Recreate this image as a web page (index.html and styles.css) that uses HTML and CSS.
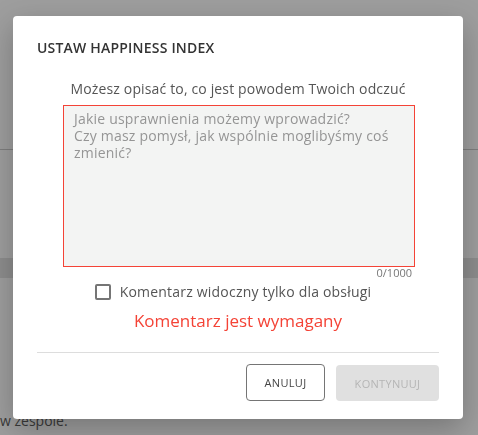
FILE: index.html
```html
<!DOCTYPE html>
<html lang="pl">
<head>
    <meta charset="UTF-8">
    <meta name="viewport" content="width=device-width, initial-scale=1.0">
    <title>Ustaw Happiness Index</title>
    <link rel="stylesheet" href="styles.css">
</head>
<body>
    <div class="page">
        <div class="page-line"></div>
        <div class="page-band"></div>
        <div class="page-text">w zespole.</div>
    </div>

    <div class="overlay">
        <div class="modal">
            <h2 class="modal-title">USTAW HAPPINESS INDEX</h2>
            <p class="modal-hint">Możesz opisać to, co jest powodem Twoich odczuć</p>

            <div class="field">
                <textarea class="comment invalid" placeholder="Jakie usprawnienia możemy wprowadzić?&#10;Czy masz pomysł, jak wspólnie moglibyśmy coś zmienić?"></textarea>
                <div class="counter">0/1000</div>
            </div>

            <label class="check">
                <span class="check-box"></span>
                <span>Komentarz widoczny tylko dla obsługi</span>
            </label>

            <div class="error-msg">Komentarz jest wymagany</div>

            <div class="modal-footer">
                <button class="btn btn-outline">ANULUJ</button>
                <button class="btn btn-disabled" disabled>KONTYNUUJ</button>
            </div>
        </div>
    </div>
</body>
</html>
```

FILE: styles.css
```css
html, body { margin: 0; padding: 0; height: 100%; }
body { font-family: "Open Sans", "Liberation Sans", sans-serif; background-color: #9e9e9e; overflow: hidden; }

/* page behind the dialog */
.page { height: 100%; display: flex; flex-direction: column; }
.page-line { height: 1px; margin-top: 149px; background-color: #7e7e7e; }
.page-band { height: 20px; margin-top: 108px; background-color: #8d8d8d; }
.page-text { margin-top: 133px; margin-left: 0; font-size: 14px; color: #3a3a3a; }

.overlay { position: fixed; inset: 0; display: flex; justify-content: center; align-items: flex-start; padding-top: 16px; }

.modal { width: 450px; height: 403px; box-sizing: border-box; margin-left: -2px; background-color: #ffffff; border-radius: 4px; box-shadow: 0 10px 30px rgba(0,0,0,0.25); padding: 0 24px; display: flex; flex-direction: column; }
.modal-title { margin: 23px 0 0; font-size: 14px; font-weight: 600; color: #333; letter-spacing: 0.2px; line-height: 18px; }
.modal-hint { margin: 23px 0 0; text-align: center; font-size: 14px; color: #555; line-height: 18px; letter-spacing: 0.15px; }

.field { width: 352px; margin: 7px 0 0 26px; display: flex; flex-direction: column; }
.comment { width: 100%; height: 162px; box-sizing: border-box; resize: none; padding: 4px 9px 4px 10px; background-color: #f3f4f3; border: 1px solid #ccc; font-family: inherit; font-size: 14px; line-height: 17px; color: #333; letter-spacing: 0.2px; outline: none; }
.comment.invalid { border-color: #f44336; }
.comment::placeholder { color: #959595; }
.counter { text-align: right; font-size: 11px; color: #777; line-height: 12px; margin-right: 3px; margin-top: 0; }

.check { display: flex; align-items: center; justify-content: center; gap: 9px; margin-top: 3px; margin-left: -10px; font-size: 14px; color: #555; letter-spacing: 0.2px; }
.check-box { width: 16px; height: 16px; box-sizing: border-box; border: 2px solid #757575; border-radius: 2px; }

.error-msg { text-align: center; margin-top: 9px; font-size: 17px; color: #f44336; line-height: 22px; }

.modal-footer { margin-top: 20px; border-top: 1px solid #ddd; padding-top: 11px; display: flex; justify-content: flex-end; gap: 11px; }
.btn { height: 37px; border-radius: 4px; font-family: inherit; font-size: 11px; letter-spacing: 0.3px; padding: 0 16px; cursor: pointer; }
.btn-outline { width: 79px; background-color: #fff; border: 1px solid #757575; color: #444; }
.btn-disabled { width: 103px; height: 36px; margin-top: 1px; background-color: #e0e0e0; border: none; color: #b5b5b5; cursor: default; }
```
